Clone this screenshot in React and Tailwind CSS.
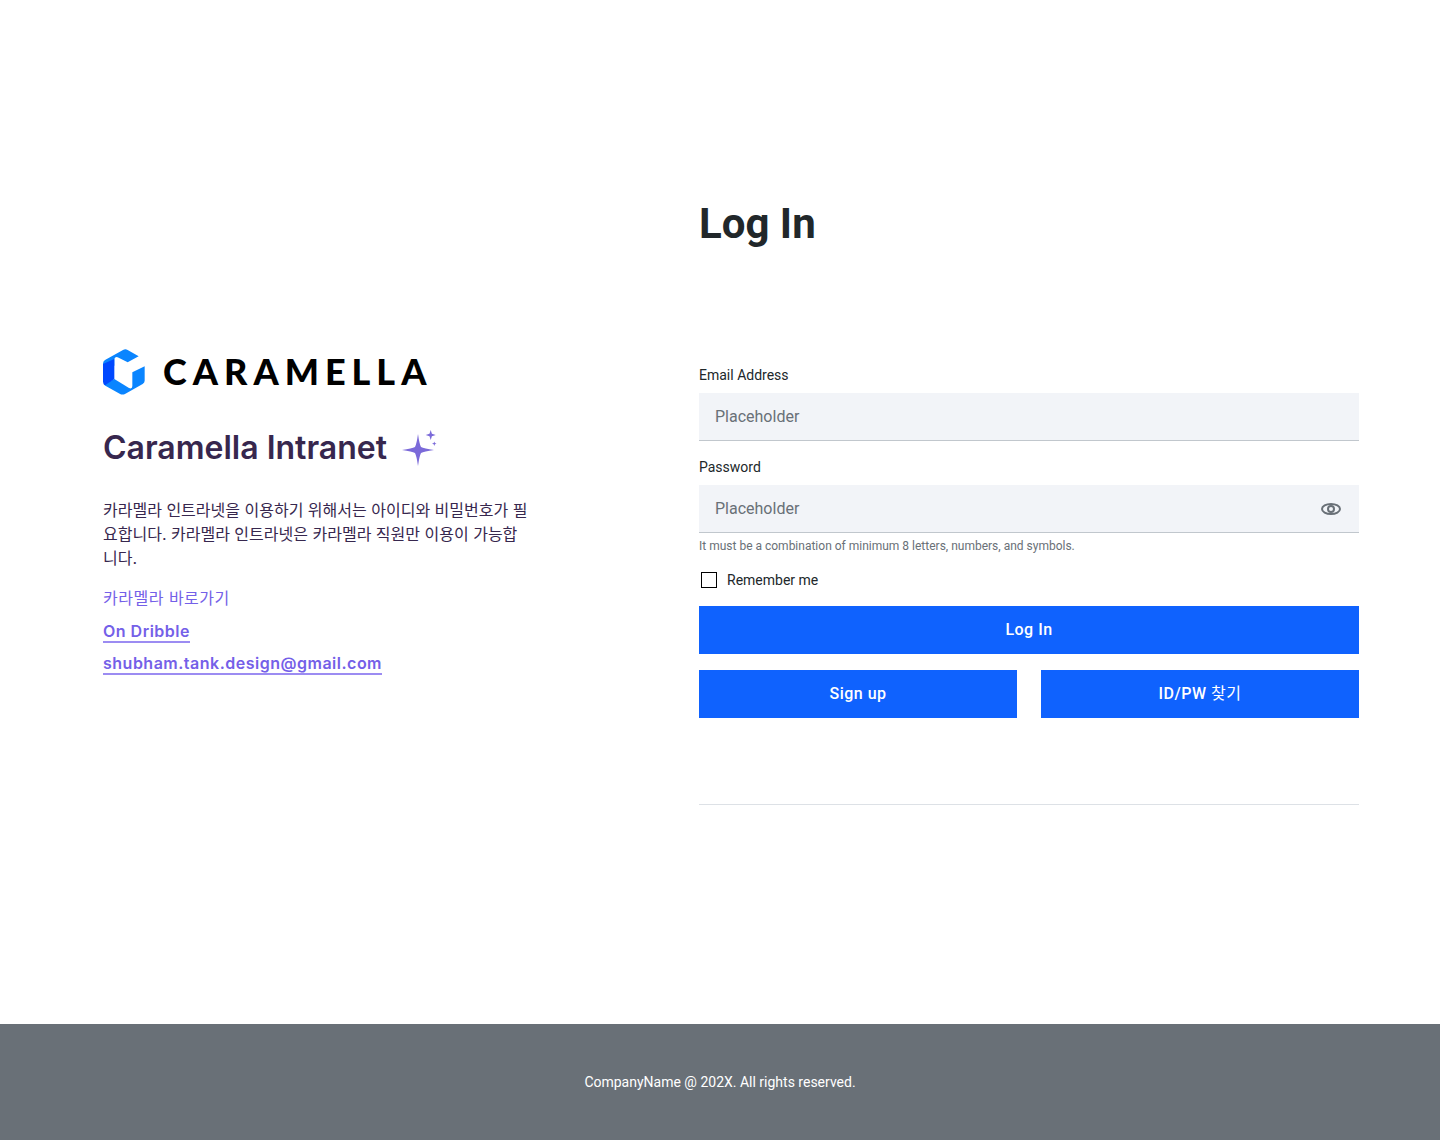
import { useState } from "react";

function LogoMark() {
  return (
    <svg viewBox="0 0 126 138" className="h-[46px] w-[42px] shrink-0" aria-hidden="true">
      <path d="M0 44Q0 37 6 33L60 3Q67 -1 74 3L107 22L74 40L47 26Q37 21 34 30V50H0Z" fill="#0A85FF" />
      <path
        d="M34 90L78 117Q88 121 88 111V70L125 52V95Q125 101 119 105L66 135Q58 139 50 134L7 110L2 105Z"
        fill="#0A85FF"
      />
      <path d="M0 45L34 30V90L6 109Q0 105 0 98Z" fill="#0048FF" />
    </svg>
  );
}

function Sparkles() {
  return (
    <svg viewBox="0 0 36 36" className="size-9 shrink-0" fill="#7B6AD9" aria-hidden="true">
      <path d="M16 4Q17.4 14 19 17Q22 18.6 32 20Q22 21.4 19 23Q17.4 26 16 36Q14.6 26 13 23Q10 21.4 0 20Q10 18.6 13 17Q14.6 14 16 4Z" />
      <path d="M28.7 0L29.9 3.8L33.7 5L29.9 6.2L28.7 10L27.5 6.2L23.7 5L27.5 3.8Z" />
      <path d="M32.3 11.5L32.9 13.1L34.5 13.7L32.9 14.3L32.3 16L31.7 14.3L30 13.7L31.7 13.1Z" />
    </svg>
  );
}

function EyeIcon() {
  return (
    <svg viewBox="0 0 24 24" className="size-6" fill="none" stroke="#697077" strokeWidth="2" aria-hidden="true">
      <ellipse cx="12" cy="12" rx="9" ry="5" />
      <circle cx="12" cy="12" r="3" />
    </svg>
  );
}

const field =
  "h-12 w-full border-b border-[#C1C7CD] bg-[#F2F4F8] px-4 text-base text-[#21272A] placeholder:text-[#697077] outline-none focus:border-[#0F62FE]";
const action =
  "h-12 w-full cursor-pointer bg-[#0F62FE] text-base font-medium tracking-[0.5px] text-white hover:bg-[#0353E9]";
const link =
  "border-b-2 border-[#9C8CF2] font-['Inter','Liberation_Sans',sans-serif] text-base leading-5 font-semibold tracking-[0.5px]";

export default function App() {
  const [visible, setVisible] = useState(false);

  return (
    <div className="flex min-h-screen flex-col bg-white font-['Roboto','Noto_Sans_CJK_KR',sans-serif] text-[#21272A]">
      <main className="grid grow grid-cols-[428fr_660fr] gap-x-[168px] pt-[196px] pr-[81px] pb-[219px] pl-[103px]">
        <section className="pt-[153px] text-[#37274E]">
          <div className="flex items-start gap-[18px]">
            <LogoMark />
            <span className="font-['Lato',sans-serif] text-[36px] leading-[44px] font-black tracking-[6px] text-black">
              CARAMELLA
            </span>
          </div>
          <div className="mt-8 flex items-center gap-[15px]">
            <h2 className="font-['Inter',sans-serif] text-[32px] leading-[42px] font-semibold">Caramella Intranet</h2>
            <Sparkles />
          </div>
          <p className="mt-[29px] font-['Inter','Noto_Sans_CJK_KR',sans-serif] text-base break-all">
            카라멜라 인트라넷을 이용하기 위해서는 아이디와 비밀번호가 필요합니다. 카라멜라 인트라넷은 카라멜라 직원만 이용이
            가능합니다.
          </p>
          <div className="mt-4 flex flex-col items-start text-[#7460E8]">
            <p className="font-['Inter','Noto_Sans_CJK_KR',sans-serif] text-base tracking-[0.5px]">카라멜라 바로가기</p>
            <a href="#dribble" className={`${link} mt-[11px]`}>
              On Dribble
            </a>
            <a href="mailto:shubham.tank.design@gmail.com" className={`${link} mt-2.5`}>
              shubham.tank.design@gmail.com
            </a>
          </div>
        </section>

        <section>
          <h1 className="text-[42px] leading-[56px] font-bold">Log In</h1>
          <form className="mt-[113px]" onSubmit={(e) => e.preventDefault()}>
            <label htmlFor="email" className="block text-sm">
              Email Address
            </label>
            <input id="email" type="email" placeholder="Placeholder" className={`${field} mt-2`} />
            <label htmlFor="password" className="mt-4 block text-sm">
              Password
            </label>
            <div className="relative mt-2">
              <input
                id="password"
                type={visible ? "text" : "password"}
                placeholder="Placeholder"
                aria-describedby="password-hint"
                className={`${field} pr-14`}
              />
              <button
                type="button"
                aria-label="Show password"
                onClick={() => setVisible(!visible)}
                className="absolute top-3 right-4 cursor-pointer"
              >
                <EyeIcon />
              </button>
            </div>
            <p id="password-hint" className="mt-[5px] text-xs text-[#697077]">
              It must be a combination of minimum 8 letters, numbers, and symbols.
            </p>
            <label className="mt-4 flex items-center gap-2.5 pl-0.5 text-sm">
              <input
                type="checkbox"
                className="size-4 appearance-none border border-black bg-white checked:bg-[#0F62FE]"
              />
              Remember me
            </label>
            <button type="submit" className={`${action} mt-4`}>
              Log In
            </button>
            <div className="mt-4 grid grid-cols-2 gap-6">
              <button type="button" className={action}>
                Sign up
              </button>
              <button type="button" className={action}>
                ID/PW <span className="font-normal">찾기</span>
              </button>
            </div>
          </form>
          <hr className="mt-[86px] border-[#DDE1E6]" />
        </section>
      </main>
      <footer className="bg-[#697077] px-6 py-12 text-center text-sm text-white">
        CompanyName @ 202X. All rights reserved.
      </footer>
    </div>
  );
}
